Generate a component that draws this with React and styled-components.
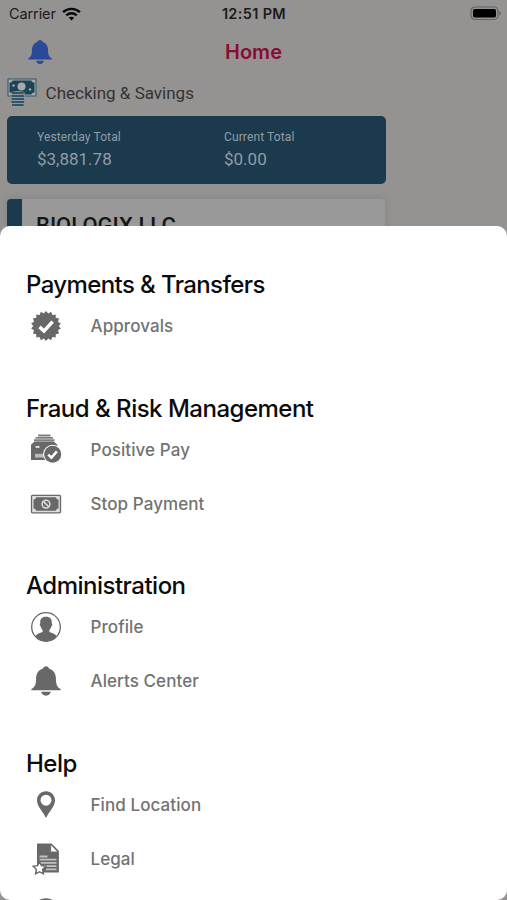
import React from 'react'
import styled, { createGlobalStyle } from 'styled-components'

const sections = [
  { title: 'Payments & Transfers', spacing: '-0.6px', items: [{ label: 'Approvals', icon: 'approvals' }] },
  {
    title: 'Fraud & Risk Management',
    spacing: '-0.5px',
    items: [
      { label: 'Positive Pay', icon: 'positive' },
      { label: 'Stop Payment', icon: 'stop' }
    ]
  },
  {
    title: 'Administration',
    spacing: '-0.5px',
    items: [
      { label: 'Profile', icon: 'profile' },
      { label: 'Alerts Center', icon: 'bell' }
    ]
  },
  {
    title: 'Help',
    spacing: '-0.5px',
    items: [
      { label: 'Find Location', icon: 'pin' },
      { label: 'Legal', icon: 'legal' },
      { label: '', icon: 'contact' }
    ]
  }
]

// zigzag edge of the approval seal
const sealPoints = Array.from({ length: 36 }, (_, i) => {
  const angle = (i * Math.PI) / 18 - Math.PI / 2
  const r = i % 2 ? 12.7 : 15.1
  return `${(16 + r * Math.cos(angle)).toFixed(2)},${(16 + r * Math.sin(angle)).toFixed(2)}`
}).join(' ')

const BellShape = () => (
  <>
    <path d="M16 1.2c1.6 0 2.7 1 3 2.3 4.6 1.5 6.8 5.2 6.9 9.8.1 5.7.7 8.4 4.7 10.8v1.1H1.4v-1.1c4-2.4 4.6-5.1 4.7-10.8.1-4.6 2.3-8.3 6.9-9.8.3-1.3 1.4-2.3 3-2.3z" />
    <path d="M11.2 26.8h9.6c-.4 2.3-2.2 3.9-4.8 3.9s-4.4-1.6-4.8-3.9z" />
  </>
)

const shapes = {
  approvals: (
    <>
      <polygon points={sealPoints} />
      <path d="M9.5 16.9l4.5 4.2 8.6-9.5" fill="none" stroke="#fff" strokeWidth="3.5" />
    </>
  ),
  positive: (
    <>
      <path d="M8 1.500h12.500M5.500 3.900h17.500M4 6.300h20.500" stroke="#808080" strokeWidth="1.9" />
      <path d="M4.500 7.500h19.300l3.500 3.300v15.200H1V10.800z" />
      <path d="M5.500 12.900h4" stroke="#ddd" strokeWidth="2" />
      <path d="M5 19.800h11v3.800H5z" fill="#bbb" />
      <circle cx="22.7" cy="20.3" r="9.5" fill="#fff" />
      <circle cx="22.7" cy="20.3" r="8.5" />
      <path d="M18.2 20.600l3.200 3 5.500-6.200" fill="none" stroke="#fff" strokeWidth="2.5" />
    </>
  ),
  stop: (
    <>
      <rect x="1.5" y="7.3" width="29" height="17.500" rx="1" fill="#ddd" stroke="#686868" strokeWidth="1.3" />
      <path d="M6 9.300h20q0 2.300 2.500 2.300v8.900q-2.500 0-2.500 2.300H6q0-2.300-2.500-2.300v-8.900Q6 11.600 6 9.300z" />
      <circle cx="16" cy="16.1" r="3.9" fill="none" stroke="#ddd" strokeWidth="1.5" />
      <path d="M13.300 13.400l5.400 5.400" stroke="#ddd" strokeWidth="1.6" />
    </>
  ),
  profile: (
    <>
      <circle cx="16" cy="16" r="14.3" fill="#fff" stroke="#686868" strokeWidth="1.3" />
      <path d="M16 5.8c4.3 0 6.2 2.5 5.7 6.5 1 .5.6 2.8-.4 3.2-.3 1.6-1 2.7-1.9 3.5v2c2.700 1.400 5.700 1.500 7.600 4.300-2.700 3.300-6.700 5-11 5s-8.300-1.700-11-5c1.900-2.800 4.900-2.900 7.600-4.300v-2c-.9-.8-1.600-1.900-1.900-3.500-1-.4-1.400-2.700-.4-3.200-.5-4 1.400-6.500 5.700-6.500z" />
    </>
  ),
  bell: <BellShape />,
  pin: (
    <path
      fillRule="evenodd"
      d="M16 2.300c5 0 9 4 9 8.900 0 6.500-6 11-9 17.900-3-6.900-9-11.400-9-17.900 0-4.900 4-8.900 9-8.900zm0 3.400a5.500 5.500 0 1 0 0 11 5.500 5.500 0 0 0 0-11z"
    />
  ),
  legal: (
    <>
      <path d="M7 .5h14.700L28.900 8v21.500H7z" />
      <path d="M20.700 1.300V9h7.300z" fill="#fff" stroke="#686868" strokeWidth=".9" />
      <path d="M9.500 13.500h8M9.500 16.700h17M9.500 19.900h17M12 23.100h14.500M16 26.300h10.500" stroke="#c2c2c2" strokeWidth="1.8" />
      <path d="M9.500 18.700l1.900 4 4.400.6-3.200 3.100.8 4.400-3.900-2.100-3.900 2.100.8-4.400-3.200-3.100 4.400-.6z" fill="#fff" stroke="#686868" strokeWidth="1.4" />
    </>
  ),
  contact: <circle cx="16" cy="15.8" r="14.5" />
}

const App = () => (
  <Screen>
    <GlobalStyle />
    <Home>
      <StatusBar>
        <Carrier>
          Carrier
          <svg width="19" height="14" viewBox="0 0 19 14" fill="none" stroke="#080808" strokeWidth="2.4">
            <path d="M1.100 5.200C5.800.7 13.200.7 17.900 5.200M4.300 8.400c2.900-2.800 7.500-2.800 10.400 0" />
            <path d="M6.800 10.700c1.600-1.400 3.800-1.400 5.400 0L9.500 13.500z" fill="#080808" stroke="none" />
          </svg>
        </Carrier>
        <Time>12:51 PM</Time>
        <Battery>
          <svg width="32" height="15" viewBox="0 0 32 15">
            <rect x="1" y="1" width="27" height="12.5" rx="3.8" fill="none" stroke="#646262" strokeWidth="1.2" />
            <rect x="3" y="3" width="23" height="8.5" rx="1.8" fill="#000" />
            <path d="M29.300 5v4.500q1.600-.8 1.600-2.250T29.300 5z" fill="#646262" />
          </svg>
        </Battery>
      </StatusBar>
      <NavBar>
        <svg width="26" height="26" viewBox="0 0 32 32" fill="#2a4999">
          <BellShape />
        </svg>
        <NavTitle>Home</NavTitle>
      </NavBar>
      <AccountType>
        <svg width="30" height="30" viewBox="0 0 30 30">
          <rect x="1" y="1" width="28" height="17" fill="#a6aaad" stroke="#31566a" strokeWidth="1" />
          <path d="M5.500 2.500h19q0 2 3 2v10q-3 0-3 2h-19q0-2-3-2v-10q3 0 3-2z" fill="#1d4358" />
          <circle cx="14.5" cy="8.5" r="4" fill="#a6aaad" />
          <circle cx="6.5" cy="7.5" r="1.2" fill="#a6aaad" />
          <circle cx="23" cy="11.5" r="1.2" fill="#a6aaad" />
          <path d="M3.800 15.500q0-2.500 7-2.500t7 2.500V27q0 2.500-7 2.500t-7-2.500z" fill="#979797" />
          <path d="M5 14.900h11.600M4.500 17.900h12.600M4.500 20.900h12.600M4.500 23.900h12.600M5 26.900h11.600" stroke="#31566a" strokeWidth="2" />
        </svg>
        Checking &amp; Savings
      </AccountType>
      <Totals>
        <Total>
          <TotalLabel>Yesterday Total</TotalLabel>
          <Amount>$3,881.78</Amount>
        </Total>
        <Total>
          <TotalLabel>Current Total</TotalLabel>
          <Amount>$0.00</Amount>
        </Total>
      </Totals>
      <AccountCard>BIOLOGIX LLC</AccountCard>
    </Home>
    <Sheet>
      {sections.map(section => (
        <section key={section.title}>
          <SectionTitle $spacing={section.spacing}>{section.title}</SectionTitle>
          <Items>
            {section.items.map(item => (
              <MenuItem key={item.icon}>
                <svg width="32" height="32" viewBox="0 0 32 32" fill="#686868">
                  {shapes[item.icon]}
                </svg>
                {item.label}
              </MenuItem>
            ))}
          </Items>
        </section>
      ))}
    </Sheet>
  </Screen>
)

const GlobalStyle = createGlobalStyle`
  * {
    box-sizing: border-box;
  }
  body {
    margin: 0;
    background: #959292;
    font-family: Inter, "Liberation Sans", sans-serif;
  }
`

const Screen = styled.div`
  display: flex;
  flex-direction: column;
  width: 507px;
  height: 900px;
  overflow: hidden;
  background: #959292;
`

const Home = styled.div`
  flex: none;
  height: 225.5px;
  overflow: hidden;
`

const StatusBar = styled.div`
  display: grid;
  grid-template-columns: 1fr auto 1fr;
  align-items: center;
  height: 27px;
  padding: 0 5px 0 9px;
  color: #1c1b1b;
`

const Carrier = styled.div`
  display: flex;
  align-items: center;
  gap: 6px;
  font-size: 14.5px;
  letter-spacing: -0.1px;
`

const Time = styled.div`
  margin-left: -3px;
  font-size: 14.5px;
  font-weight: 600;
  letter-spacing: 0.35px;
`

const Battery = styled.div`
  display: flex;
  justify-content: flex-end;
`

const NavBar = styled.div`
  display: grid;
  grid-template-columns: 1fr auto 1fr;
  align-items: center;
  height: 50px;
  padding: 0 27px;
`

const NavTitle = styled.h1`
  margin: 0;
  font-size: 20px;
  font-weight: 600;
  color: #8a0c32;
`

const AccountType = styled.div`
  display: flex;
  align-items: center;
  gap: 8.6px;
  height: 32px;
  margin: 0 0 7px 7px;
  font-family: Roboto, sans-serif;
  font-size: 17px;
  color: #343333;
`

const Totals = styled.div`
  display: grid;
  grid-template-columns: 187px 1fr;
  width: 379px;
  height: 68px;
  margin-left: 7px;
  padding: 12px 0 0 30px;
  border-radius: 5px;
  background: #1b3a4e;
  color: #929da3;
  font-family: Roboto, sans-serif;
`

const Total = styled.div`
  display: flex;
  flex-direction: column;
`

const TotalLabel = styled.span`
  font-size: 12px;
  line-height: 19px;
  letter-spacing: 0.12px;
`

const Amount = styled.span`
  font-size: 17px;
  line-height: 24px;
`

const AccountCard = styled.div`
  width: 378px;
  height: 60px;
  margin: 15px 0 0 7px;
  padding: 14px 0 0 14px;
  border-left: 15px solid #1b3a4e;
  border-radius: 4px;
  background: #999;
  box-shadow: 0 0 9px rgba(0, 0, 0, 0.12);
  font-family: Roboto, sans-serif;
  font-size: 22px;
  font-weight: 500;
  line-height: 26px;
  color: #161616;
`

const Sheet = styled.main`
  flex: 1;
  min-height: 0;
  padding: 4.5px 26px 0;
  overflow: hidden;
  border-radius: 10px;
  background: #fff;
`

const SectionTitle = styled.h2`
  margin: 0;
  padding-top: 40px;
  font-size: 24px;
  font-weight: 500;
  line-height: 30px;
  letter-spacing: ${props => props.$spacing};
  color: #0b0b0b;
`

const Items = styled.div`
  margin-top: -0.7px;
  padding-bottom: 0.6px;
`

const MenuItem = styled.div`
  display: flex;
  align-items: center;
  gap: 29px;
  height: 53.8px;
  padding-left: 3.5px;
  font-size: 17px;
  font-weight: 500;
  letter-spacing: 0.08px;
  color: #727272;
`

export default App
